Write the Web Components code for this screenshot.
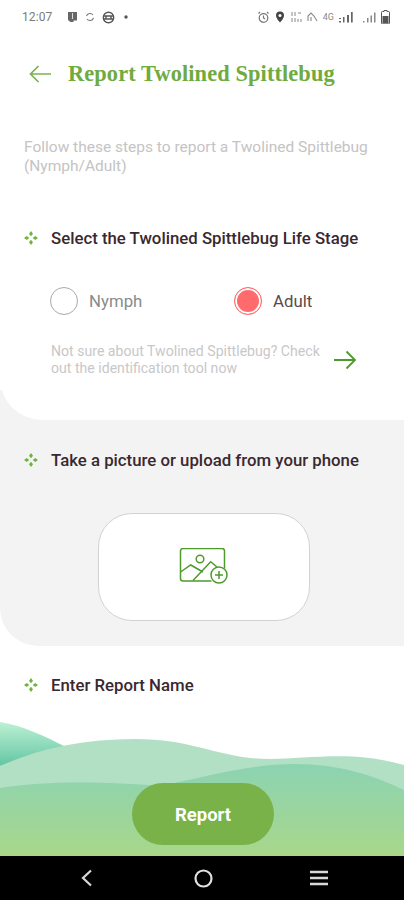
<!DOCTYPE html>
<html lang="en"><head><meta charset="utf-8"><title>Report Twolined Spittlebug</title>
<style>
html,body{margin:0;padding:0;background:#fff}
body{width:404px;height:900px;overflow:hidden;font-family:Roboto,"Liberation Sans",sans-serif}
app-screen{height:900px}
</style></head><body>
<app-screen>
  <status-bar></status-bar>
  <white-panel>
    <page-header>Report Twolined Spittlebug</page-header>
    <intro-text>Follow these steps to report a Twolined Spittlebug (Nymph/Adult)</intro-text>
    <step-title>Select the Twolined Spittlebug Life Stage</step-title>
    <stage-picker>
      <radio-option>Nymph</radio-option>
      <radio-option selected>Adult</radio-option>
    </stage-picker>
    <id-hint>Not sure about Twolined Spittlebug? Check out the identification tool now</id-hint>
  </white-panel>
  <grey-panel>
    <step-title>Take a picture or upload from your phone</step-title>
    <upload-box></upload-box>
  </grey-panel>
  <name-section><step-title>Enter Report Name</step-title></name-section>
  <wave-footer>Report</wave-footer>
  <nav-bar></nav-bar>
</app-screen>
<script>
function def(name, html){
  customElements.define(name, class extends HTMLElement{
    constructor(){super();this.attachShadow({mode:'open'}).innerHTML=html;}
  });
}
const G='#4f9a2c';
def('app-screen',`<style>:host{display:flex;flex-direction:column;width:404px;background:#fff}</style><slot></slot>`);
def('status-bar',`<style>
:host{display:flex;align-items:center;height:34px;padding:0 14px 0 22px;box-sizing:border-box;color:#7a7a7a;font:12px Roboto,sans-serif}
.t{width:45px;letter-spacing:.1px}.l{display:flex;gap:7px;align-items:center}.sp{flex:1}
.r{display:flex;gap:5px;align-items:center}svg{display:block}
.n{font-size:9px;color:#8a8a8a}
</style>
<span class="t">12:07</span>
<div class="l">
<svg width="11" height="12" viewBox="0 0 11 12"><path d="M1 1h9v8.500H6.500V11H3.500L1 9z" fill="#666"/><path d="M5.500 2v6" stroke="#ddd"/></svg>
<svg width="10" height="10" viewBox="0 0 10 10" fill="none" stroke="#777" stroke-width="1.100"><path d="M1.500 4A3.700 3.700 0 0 1 8 3M8.500 6A3.700 3.700 0 0 1 2 7"/></svg>
<svg width="13" height="13" viewBox="0 0 13 13" fill="none" stroke="#555" stroke-width="1.400"><circle cx="6.500" cy="6.500" r="5.200"/><path d="M1.500 5h10M1.500 8h10M4 5v3M9 5v3"/></svg>
<svg width="4" height="4" viewBox="0 0 4 4" style="margin-left:2px"><circle cx="2" cy="2" r="1.700" fill="#555"/></svg>
</div><span class="sp"></span>
<div class="r">
<svg width="13" height="13" viewBox="0 0 13 13" fill="none" stroke="#777" stroke-width="1.200"><circle cx="6.500" cy="7" r="4.300"/><path d="M6.500 4.500V7l1.500 1M1.500 2.500 3 1M11.500 2.500 10 1"/></svg>
<svg width="10" height="12" viewBox="0 0 10 12"><path d="M5 .5A4 4 0 0 0 1 4.500C1 7.500 5 11.500 5 11.500S9 7.500 9 4.500A4 4 0 0 0 5 .5z" fill="#444"/><circle cx="5" cy="4.500" r="1.500" fill="#fff"/></svg>
<svg width="12" height="12" viewBox="0 0 12 12" stroke="#888" stroke-width="1" fill="none"><path d="M2 1v4M5 1v4M8 2h3M2 7v4M5 7v4M8 8v3M11 8v3"/></svg>
<svg width="11" height="10" viewBox="0 0 11 10" stroke="#888" stroke-width="1.100" fill="none"><path d="M1 9V4l3-3 3 3 3 5M4 9V5"/></svg>
<span class="n">4G</span>
<svg width="14" height="11" viewBox="0 0 14 11" fill="#666"><path d="M0 6h2v1H0zM0 9h2v1.500H0zM4 5h1.500v5.500H4zM8 3h2v7.500H8zM12 0h1.700v10.500H12z"/></svg>
<svg width="14" height="11" viewBox="0 0 14 11" fill="#888" style="margin-left:4px"><path d="M1 9h1.500v1.500H1zM5 6h1.500v4.500H5zM8.500 3.500H10v7H8.500zM12 .5h1.500v10H12z"/></svg>
<svg width="9" height="14" viewBox="0 0 9 14"><path d="M3 .5h3v1h1.500a1 1 0 0 1 1 1V13a.8.8 0 0 1-.8.800H1.300A.8.8 0 0 1 .5 13V2.500a1 1 0 0 1 1-1H3z" fill="#fff" stroke="#555"/><rect x="1.500" y="6" width="6" height="7" fill="#555"/></svg>
</div>`);
def('white-panel',`<style>:host{display:block;height:386px;background:#fff;border-bottom-left-radius:42px;position:relative;z-index:1}</style><slot></slot>`);
def('page-header',`<style>
:host{display:flex;align-items:center;gap:17px;padding:26px 0 0 29px;height:28px}
span{font:700 22.400px "Liberation Serif",serif;color:#6fab3f;white-space:nowrap;letter-spacing:.1px}
svg{display:block;flex:none}
</style><svg width="22" height="18" viewBox="0 0 22 18" fill="none" stroke="#79b350" stroke-width="1.700"><path d="M22 9H1.500M9.500 1 1.500 9l8 8"/></svg><span><slot></slot></span>`);
def('intro-text',`<style>:host{display:block;margin:50px 24px 52px;font:15.500px/19px Roboto,sans-serif;color:#c4c4c4}</style><slot></slot>`);
def('step-title',`<style>
:host{display:flex;align-items:center;gap:13px;padding-left:24px;font:500 16.800px/20px Roboto,sans-serif;color:#3a2830;white-space:nowrap}
svg{display:block;flex:none}
</style><svg width="14" height="14" viewBox="0 0 14 14" fill="#6fb33f"><path d="M7 0 9 2.800 7 5.200 5 2.800zM7 8.800 9 11.200 7 14 5 11.200zM0 7 2.800 5 5.200 7 2.800 9zM8.800 7 11.200 5 14 7 11.200 9z"/></svg><slot></slot>`);
def('stage-picker',`<style>:host{display:grid;grid-template-columns:184px 1fr;padding:39px 0 0 50px}</style><slot></slot>`);
def('radio-option',`<style>
:host{display:flex;align-items:center;gap:11px;font:16.800px Roboto,sans-serif;color:#8a8a8a}
:host([selected]){color:#5a4a4e}
i{display:block;box-sizing:border-box;width:28px;height:28px;border-radius:50%;border:1.500px solid #a9a9a9;background:#fff}
:host([selected]) i{border-color:#ff6a6c;background:#ff6a6c;box-shadow:inset 0 0 0 2px #fff}
</style><i></i><span><slot></slot></span>`);
def('id-hint',`<style>
:host{display:flex;align-items:center;margin:28px 0 0 51px;width:306px;justify-content:space-between;font:14.100px/17px Roboto,sans-serif;color:#c8c8c8}
span{width:276px;display:block}svg{display:block;flex:none}
</style><span><slot></slot></span><svg width="23" height="20" viewBox="0 0 23 20" fill="none" stroke="${G}" stroke-width="1.800"><path d="M0 10h21M12.500 1.500 21 10l-8.500 8.500"/></svg>`);
def('grey-panel',`<style>
:host{display:block;margin-top:-30px;padding:60px 0 0;height:196px;background:#f3f3f3;border-bottom-left-radius:38px}
</style><slot></slot>`);
def('upload-box',`<style>
:host{display:flex;align-items:center;justify-content:center;box-sizing:border-box;width:212px;height:108px;margin:43px 0 0 98px;background:#fff;border:1.500px solid #d2d2d2;border-radius:34px}
svg{display:block}
</style><svg width="50" height="38" viewBox="0 0 50 38" fill="none" stroke="${G}" stroke-width="1.500"><path d="M32.500 33H4A2.500 2.500 0 0 1 1.500 30.500V3A2.500 2.500 0 0 1 4 .5h39A2.500 2.500 0 0 1 45.500 3v17.500"/><circle cx="21" cy="11" r="3.800"/><path d="M1.500 24 11.700 17l12.300 7M14 32.500 31.700 13.700 38 19"/><circle cx="40" cy="27" r="8"/><path d="M40 23v8M36 27h8"/></svg>`);
def('name-section',`<style>:host{display:block;padding-top:29px;height:45px}</style><slot></slot>`);
def('wave-footer',`<style>
:host{display:block;position:relative;height:136px;overflow:hidden}
svg{position:absolute;left:0;top:0;display:block}
.b{position:absolute;left:132px;top:63px;width:142px;height:62px;border-radius:31px;background:#78b248;color:#fff;font:700 18.500px/64px Roboto,sans-serif;text-align:center}
</style>
<svg width="404" height="136" viewBox="0 0 404 136">
<defs>
<linearGradient id="a" x1="0" y1="0" x2="0" y2="1"><stop offset="0" stop-color="#bdf0d4"/><stop offset="1" stop-color="#62c6a4"/></linearGradient>
<linearGradient id="c" x1="0" y1="0" x2="0" y2="1"><stop offset="0" stop-color="#8cd3b3"/><stop offset="1" stop-color="#a8d78a"/></linearGradient>
</defs>
<path d="M0 2C24 6 44 16 66 27L30 40 0 46z" fill="url(#a)"/>
<path d="M0 46C40 28 85 19 135 19 195 19 220 39 270 39 310 39 350 30 404 45V136H0z" fill="#b1e0c5"/>
<path d="M0 68C50 60 110 62 160 66 210 56 250 44 295 44 340 44 375 56 404 70V136H0z" fill="url(#c)"/>
</svg><div class="b"><slot></slot></div>`);
def('nav-bar',`<style>
:host{display:block;height:44px;background:#000}
div{display:grid;grid-template-columns:repeat(3,1fr);height:100%;align-items:center;justify-items:center;padding-left:2px}
svg{display:block}
</style><div>
<svg width="14" height="18" viewBox="0 0 14 18" fill="none" stroke="#d8d8d8" stroke-width="2.200" style="margin-left:35px"><path d="M11 1.500 3 9l8 7.500"/></svg>
<svg width="19" height="19" viewBox="0 0 19 19" fill="none" stroke="#e0e0e0" stroke-width="2.200"><circle cx="9.500" cy="9.500" r="8"/></svg>
<svg width="20" height="16" viewBox="0 0 20 16" fill="none" stroke="#d8d8d8" stroke-width="2.300" style="margin-right:36px"><path d="M1 2h18M1 8h18M1 14h18"/></svg>
</div>`);
</script>
</body></html>
